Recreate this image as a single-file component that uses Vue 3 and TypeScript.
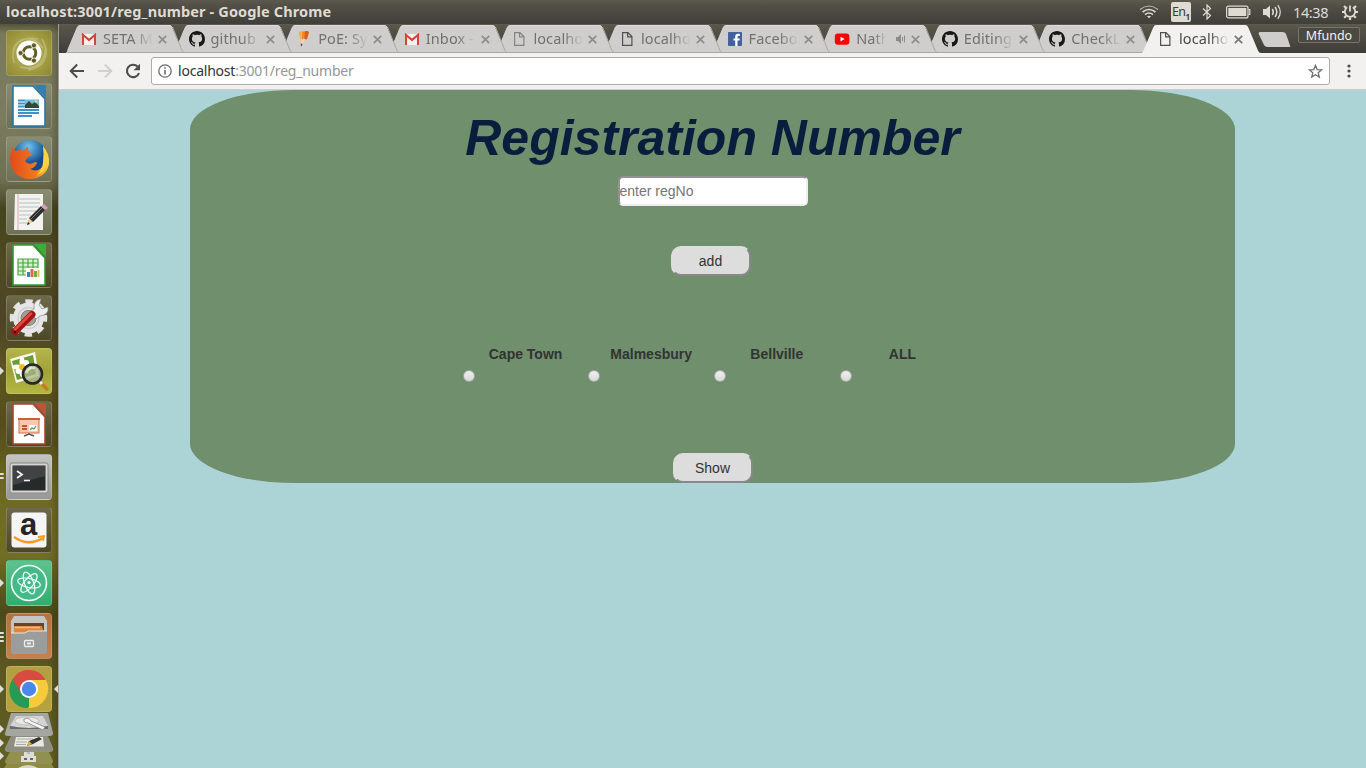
<script setup lang="ts">
import { ref } from 'vue'

interface Tab {
  icon: 'gmail' | 'github' | 'pencil' | 'page' | 'facebook' | 'youtube'
  text: string
  audio?: boolean
  dim?: boolean
}

const tabs: Tab[] = [
  { icon: 'gmail', text: 'SETA M' },
  { icon: 'github', text: 'github' },
  { icon: 'pencil', text: 'PoE: Sy' },
  { icon: 'gmail', text: 'Inbox -' },
  { icon: 'page', text: 'localho', dim: true },
  { icon: 'page', text: 'localho' },
  { icon: 'facebook', text: 'Facebo' },
  { icon: 'youtube', text: 'Nath', audio: true },
  { icon: 'github', text: 'Editing' },
  { icon: 'github', text: 'CheckL' },
  { icon: 'page', text: 'localho' },
]
const active = tabs.length - 1

interface Launcher {
  name: string
  tone: string
  marks?: number
}
const launchers: Launcher[] = [
  { name: 'dash', tone: 'olive' },
  { name: 'writer', tone: 'glass' },
  { name: 'firefox', tone: 'glass' },
  { name: 'gedit', tone: 'glass' },
  { name: 'calc', tone: 'dark' },
  { name: 'settings', tone: 'dark' },
  { name: 'viewer', tone: 'lime', marks: 1 },
  { name: 'impress', tone: 'dark' },
  { name: 'terminal', tone: 'silver', marks: 2 },
  { name: 'amazon', tone: 'dark' },
  { name: 'atom', tone: 'green', marks: 1 },
  { name: 'files', tone: 'orange', marks: 3 },
  { name: 'chrome', tone: 'gold', marks: 1 },
]

const towns = ['Cape Town', 'Malmesbury', 'Bellville', 'ALL']
const regNo = ref('')
</script>

<template>
  <div class="desktop">
    <header class="panel">
      <span class="window-title">localhost:3001/reg_number - Google Chrome</span>
      <div class="indicators">
        <svg class="wifi" width="20" height="16" viewBox="0 0 20 16" fill="none" stroke="#dfdbd2">
          <path d="M1 5.500Q10-1.500 19 5.500" stroke-width="1.200" opacity=".75" />
          <path d="M3.600 8Q10 3 16.400 8" stroke-width="1.700" />
          <path d="M6 10.600Q10 7.400 14 10.600" stroke-width="1.600" />
          <path d="M8 12.300Q10 11 12 12.300L10 14.300z" fill="#dfdbd2" stroke="none" />
        </svg>
        <span class="lang">En<sub>1</sub></span>
        <svg class="bt" width="10" height="16" viewBox="0 0 10 16" fill="none" stroke="#dfdbd2" stroke-width="1.200">
          <path d="M1 4.500L8.500 11.500L5 15V1L8.500 4.500L1 11.500" />
        </svg>
        <svg class="bat" width="25" height="14" viewBox="0 0 25 14">
          <rect x=".6" y="1.100" width="21.400" height="11.800" rx="2" fill="none" stroke="#dfdbd2" stroke-width="1.200" />
          <rect x="2.300" y="3" width="18" height="8" fill="#dfdbd2" />
          <path d="M22.500 4.500h1.300v5h-1.300" fill="none" stroke="#dfdbd2" stroke-width="1.200" />
        </svg>
        <svg class="vol" width="21" height="16" viewBox="0 0 21 16" fill="none" stroke="#dfdbd2" stroke-width="1.500">
          <path d="M1 5h3l4-3.500v13L4 11H1z" fill="#dfdbd2" stroke="none" />
          <path d="M10.300 5q2 3 0 6" />
          <path d="M13 3q3.600 5 0 10" />
          <path d="M15.800 1.200q5 6.800 0 13.600" stroke-width="1.200" />
        </svg>
        <span class="clock">14:38</span>
        <svg class="gear" width="18" height="18" viewBox="0 0 18 18" fill="none" stroke="#dfdbd2">
          <path d="M6.200 4.300a5.200 5.200 0 1 0 5.600 0" stroke-width="1.800" />
          <path d="M9 2.500v6" stroke-width="1.800" />
          <path d="M4.800 4.800L3 3M13.200 4.800L15 3M3.700 9H1M14.300 9H17M5 13L3.200 14.800M13 13l1.800 1.800M9 14.500V17" stroke-width="2.200" />
        </svg>
      </div>
    </header>

    <div class="workspace">
      <nav class="launcher">
        <div v-for="l in launchers" :key="l.name" class="slot">
          <span v-if="l.marks" class="marks" :class="{ bars: l.marks > 1 }">
            <i v-for="n in l.marks" :key="n"></i>
          </span>
          <div class="tile" :class="l.tone">
            <svg v-if="l.name === 'dash'" viewBox="0 0 46 46">
              <g fill="none" stroke="#e5e3b0" opacity=".35">
                <path d="M8 33C3 14 16 6 32 9M36 9c10 17 1 29-14 31M7 20C12 5 29 6 37 18M14 37c18 5 29-9 24-25" stroke-width="1.500" />
              </g>
              <circle cx="23" cy="23" r="12.500" fill="#fff" />
              <circle cx="23.500" cy="23" r="6.300" fill="none" stroke="#625d26" stroke-width="3" />
              <path d="M23.500 23L14.500 23M23.500 23l4.500 8M23.500 23l4.500-8" stroke="#fff" stroke-width="1.200" />
              <g fill="#625d26" stroke="#fff" stroke-width=".8">
                <circle cx="14.600" cy="23" r="2.600" /><circle cx="27.900" cy="15.400" r="2.600" /><circle cx="27.900" cy="30.600" r="2.600" />
              </g>
            </svg>

            <svg v-else-if="l.name === 'writer'" viewBox="0 0 46 46">
              <path d="M7 3h20l12 13v27H7z" fill="#fff" stroke="#2477ad" stroke-width="1.600" />
              <path d="M28 2h12v13z" fill="#2d80b8" />
              <path d="M12 17.500h7M12 20.500h7M12 23.500h7M12 27h21M12 30h21M12 33h14" stroke="#3b92cb" stroke-width="2" />
              <rect x="19" y="16.500" width="14" height="8.500" fill="#72bce6" />
              <path d="M19 25v-3l4-4 3 3 3-2 4 4v2z" fill="#2f4a3b" /><circle cx="30" cy="18.500" r="1.300" fill="#f4dc5c" />
            </svg>

            <svg v-else-if="l.name === 'firefox'" viewBox="0 0 46 46">
              <defs>
                <radialGradient id="ffGlobe" cx=".45" cy=".2"><stop offset="0" stop-color="#6cc5ee" /><stop offset="1" stop-color="#164a8e" /></radialGradient>
                <linearGradient id="ffFur" x1="0" x2="1"><stop offset="0" stop-color="#e04a1b" /><stop offset=".65" stop-color="#f0781e" /><stop offset="1" stop-color="#fbd43c" /></linearGradient>
              </defs>
              <circle cx="24" cy="21.500" r="17.500" fill="url(#ffGlobe)" />
              <path d="M6 11l4 4q4-2 7 0l5-5q0 4 1 6l4 3-5 2-3 4q4 5 10 1 2 0 2 1-2 5-7 6 8 4 13-3 4-7 3-15 3 4 3 9c1 11-8 19-19 19S4 35 4 23q0-6 2-8z" fill="url(#ffFur)" />
              <path d="M37 10q7 8 5 17-3 9-11 12 6-7 6-13 1-8 0-16" fill="#fbd33b" />
            </svg>

            <svg v-else-if="l.name === 'gedit'" viewBox="0 0 46 46">
              <path d="M9 5h28v36H8z" fill="#f2f2ef" /><path d="M12 5v36" stroke="#e7a7a7" />
              <path d="M13 10h21M13 14h21M13 18h20M13 22h17M13 26h12M13 30h8M13 34h8" stroke="#b9bcc1" stroke-width="1.100" />
              <path d="M21 35l2-6 4 4z" fill="#e4c99a" /><path d="M21 36l1-3 2 2z" fill="#222" />
              <path d="M23 29L35 17l4 4-12 12z" fill="#2e2e2e" /><path d="M25 30L36 19" stroke="#777" />
              <path d="M35 17l3-2 4 4-3 2z" fill="#d99ac0" />
            </svg>

            <svg v-else-if="l.name === 'calc'" viewBox="0 0 46 46">
              <path d="M7 3h20l12 13v27H7z" fill="#fff" stroke="#2c9c2f" stroke-width="1.600" />
              <path d="M28 2h12v13z" fill="#3aae3c" />
              <rect x="12" y="17" width="20" height="16" fill="#d9f1d2" />
              <path d="M12 17h20v16H12zM12 21h20M12 25h20M12 29h20M17 17v16M22 17v16M27 17v16" stroke="#46a843" stroke-width="1.200" fill="none" />
              <rect x="20" y="26" width="14" height="9" fill="#fff" />
              <path d="M22.500 35v-5" stroke="#397fc0" stroke-width="3" /><path d="M26 35v-8" stroke="#de6742" stroke-width="3" /><path d="M29.500 35v-6" stroke="#6caf4a" stroke-width="3" /><path d="M32.500 35v-7" stroke="#e4b94e" stroke-width="2" />
            </svg>

            <svg v-else-if="l.name === 'settings'" viewBox="0 0 46 46">
              <circle cx="22.500" cy="23" r="16.300" fill="none" stroke="#e2e2e2" stroke-width="5" stroke-dasharray="7.200 5.602" stroke-dashoffset="3.600" />
              <circle cx="22.500" cy="23" r="11.700" fill="none" stroke="#e6e6e6" stroke-width="7.500" />
              <circle cx="22.500" cy="23" r="10.500" fill="none" stroke="#cfcfcf" stroke-width="1.500" />
              <circle cx="22.500" cy="23" r="7.500" fill="#a09e94" />
              <path d="M24 17l4-3q-1-9 7-10l-2 6 3 4 6-2q1 8-8 9l-4 3z" fill="#eceded" stroke="#8d8d8d" stroke-width=".7" />
              <path d="M9 36.500L26 19.500" stroke="#a31515" stroke-width="7" stroke-linecap="round" /><path d="M9 34.500L25 18.500" stroke="#e34a42" stroke-width="2.500" stroke-linecap="round" />
              <circle cx="9" cy="37" r="1.200" fill="#400" />
            </svg>

            <svg v-else-if="l.name === 'viewer'" viewBox="0 0 46 46">
              <path d="M4 11l25-7 4 24-23 7z" fill="#f6f6f1" /><path d="M6 13l21-6 3 19-19 6z" fill="#6b9b36" />
              <g fill="#fff"><ellipse cx="16" cy="14" rx="2.500" ry="5" /><ellipse cx="16" cy="24" rx="2.500" ry="5" /><ellipse cx="11" cy="19" rx="5" ry="2.500" /><ellipse cx="21" cy="19" rx="5" ry="2.500" /><circle cx="20" cy="15" r="3" /><circle cx="12.500" cy="23" r="3" /></g>
              <circle cx="16" cy="19" r="3" fill="#f2b921" />
              <path d="M34 34l7 7" stroke="#c77a2a" stroke-width="3.500" stroke-linecap="round" /><path d="M33 33l3 3" stroke="#eee" stroke-width="3" />
              <circle cx="26.500" cy="26" r="9.500" fill="#aab58c" fill-opacity=".75" stroke="#25272a" stroke-width="2.600" />
              <path d="M20 25q3-6 9-5" stroke="#f5f5e5" stroke-width="2.500" fill="none" opacity=".7" />
            </svg>

            <svg v-else-if="l.name === 'impress'" viewBox="0 0 46 46">
              <path d="M7 3h20l12 13v27H7z" fill="#fff" stroke="#ad4429" stroke-width="1.600" />
              <path d="M28 2h12v13z" fill="#bd543a" />
              <rect x="13" y="18" width="20" height="14" fill="#f6c8ae" stroke="#d66c45" /><path d="M12 18h22" stroke="#d15d34" stroke-width="2" />
              <path d="M16 25h5M16 28h5" stroke="#c8552f" stroke-width="2" /><rect x="23" y="24" width="8" height="6" fill="#fff" /><path d="M24 29l2-2 2 1 2-3" stroke="#4d9e53" stroke-width="1.300" fill="none" />
              <path d="M23 32v2M18 35l5-2 5 2" stroke="#555" stroke-width="1.500" fill="none" />
            </svg>

            <svg v-else-if="l.name === 'terminal'" viewBox="0 0 46 46">
              <rect x="4" y="9" width="38" height="30" rx="2" fill="#d5d5d2" stroke="#888" />
              <rect x="6.500" y="11.500" width="33" height="25" fill="#272a2b" /><path d="M7 12h32v10L7 31z" fill="#4b4e4f" opacity=".7" />
              <path d="M11 17l5 3.500-5 3.500" stroke="#f2f2f2" stroke-width="1.800" fill="none" /><path d="M18 26.500h6" stroke="#f2f2f2" stroke-width="1.600" />
            </svg>

            <svg v-else-if="l.name === 'amazon'" viewBox="0 0 46 46">
              <rect x="5.500" y="5.500" width="35" height="35" rx="3" fill="#f5f5f5" />
              <text x="22.500" y="27.500" text-anchor="middle" font-family="Liberation Sans, sans-serif" font-weight="700" font-size="31" fill="#252525">a</text>
              <path d="M8 30q14 10 29 1" stroke="#f59a1b" stroke-width="2.300" fill="none" /><path d="M32 30l6-1-1 5" stroke="#f59a1b" stroke-width="1.800" fill="none" />
            </svg>

            <svg v-else-if="l.name === 'atom'" viewBox="0 0 46 46" fill="none" stroke="#effff6">
              <circle cx="23" cy="23" r="17.500" fill="#44b98a" stroke-width="1.600" />
              <g stroke-width="1.200"><ellipse cx="23" cy="23" rx="11.500" ry="4.500" transform="rotate(12 23 23)" /><ellipse cx="23" cy="23" rx="11.500" ry="4.500" transform="rotate(70 23 23)" /><ellipse cx="23" cy="23" rx="11.500" ry="4.500" transform="rotate(130 23 23)" /></g>
              <circle cx="23" cy="22.500" r="1.600" fill="#effff6" stroke="none" />
            </svg>

            <svg v-else-if="l.name === 'files'" viewBox="0 0 46 46">
              <path d="M8 3h30l3 5v12H5V8z" fill="#c3c5c3" /><path d="M8 10h30v9H8z" fill="#65442f" /><path d="M8 13h28l2 7H8z" fill="#dd863e" /><path d="M9 14.500h25" stroke="#f4bb7d" stroke-width="1.500" />
              <path d="M5 20h14l3-2h19v21q0 2-2 2H7q-2 0-2-2z" fill="#9a9d9b" /><path d="M5 20h14l3-2h19" stroke="#e4e4e2" fill="none" />
              <rect x="18.500" y="27.500" width="9" height="6" rx="1" fill="#9a9d9b" stroke="#eee" stroke-width="1.300" /><rect x="21" y="29.500" width="4" height="2" fill="#eee" />
            </svg>

            <svg v-else viewBox="0 0 46 46">
              <path d="M23 23L6.500 13.500A19 19 0 0 1 39.500 13.500z" fill="#d74b40" /><path d="M23 23L39.500 13.500A19 19 0 0 1 23 42z" fill="#f5cb3b" /><path d="M23 23v19A19 19 0 0 1 6.500 13.500z" fill="#269b56" />
              <path d="M23 14h16.800q2 4 2.200 9H31z" fill="#f5cb3b" /><path d="M30.800 27.500L22 42l5-1 12-18z" fill="#f5cb3b" /><path d="M15.200 27.500L6.500 13.500Q12 4 23 4v10z" fill="#d74b40" /><path d="M6.500 13.500L15.200 27.500 23 32l-1 10C6 42-1 26 6.500 13.500" fill="#269b56" />
              <circle cx="23" cy="23" r="9" fill="#fff" /><circle cx="23" cy="23" r="7.200" fill="#4b86ea" />
            </svg>
          </div>
          <span v-if="l.name === 'chrome'" class="focused"></span>
        </div>

        <svg class="stack" width="58" height="56" viewBox="0 0 58 56">
          <path d="M9 48h40l5 8H4z" fill="#8d8a42" />
          <path d="M11 38h37l5 11q0 3-3 3H8q-3 0-3-3z" fill="#929050" />
          <path d="M24 38h10v6h-10zM21 44h15v6H21z" fill="#deded9" /><path d="M24 47h3M30 47h3" stroke="#666" stroke-width="2" /><path d="M27 41h3" stroke="#999" />
          <path d="M18 56q10-6 20 0z" fill="#d5d5c5" />
          <path d="M11 24h37l5 12q1 4-3 4H8q-4 0-3-4z" fill="#919187" fill-opacity=".95" />
          <path d="M16 25h27l1 9.500H14z" fill="#e9e9e4" /><path d="M17 27h16M16 30h11M16 32.500h10" stroke="#a8aaa8" />
          <path d="M27 34l2-5 10-4 3 2-9 5z" fill="#333" /><path d="M27 34l2-5 3 3z" fill="#dfb33e" />
          <path d="M11 1h37l5 20q0 3-3 3H8q-4 0-3-3z" fill="#a9aaa7" fill-opacity=".95" />
          <path d="M16 4h27l5 10q-19 4-38 0z" fill="#d3d4d3" /><path d="M10 14q19 4 38 0v3H10z" fill="#696b6b" />
          <ellipse cx="27" cy="9" rx="12" ry="4" fill="#e8e8e7" stroke="#aaa" stroke-width=".6" /><path d="M24 7q5-2 7 2l14 6-2 3-15-7q-5 0-4-4" fill="#f5f5f5" stroke="#777" stroke-width=".7" />
          <path d="M0 13l4 4-4 4zM0 27l4 4-4 4zM0 40l4 4-4 4z" fill="#dedfd8" />
        </svg>
      </nav>

      <div class="browser">
        <div class="tabstrip">
          <div v-for="(t, i) in tabs" :key="i" class="tab" :class="{ active: i === active }" :style="{ zIndex: i === active ? 20 : 12 - i }">
            <svg class="shape" width="121" height="28" viewBox="0 0 121 28">
              <path d="M0 28L1.500 25.500 11 3Q12 0 14 0H103.500Q105.500 0 106.500 3L116 25.500Q117 28 119 28z" :fill="i === active ? '#f2f1f0' : '#d0cecd'" />
              <path v-if="i !== active" d="M106.500 2L116 25.500 118 27.500H0" fill="none" stroke="#a9a8a6" />
              <path v-if="i !== active" d="M1.500 25.500L11 3Q12 .5 14 .5H103.500Q105.500 .5 106.500 3" fill="none" stroke="#dfdddc" stroke-width=".8" />
            </svg>
            <span class="favicon">
              <svg v-if="t.icon === 'gmail'" width="16" height="16" viewBox="0 0 16 16">
                <path d="M1 3h14v11H1z" fill="#f3efed" /><path d="M2 14V4l6 5 6-5v10" fill="none" stroke="#d7453a" stroke-width="2" /><path d="M1 3l7 6 7-6" fill="none" stroke="#d7453a" stroke-width="1.500" />
              </svg>
              <svg v-else-if="t.icon === 'github'" width="16" height="16" viewBox="0 0 16 16">
                <path fill="#191717" d="M8 0C3.580 0 0 3.580 0 8c0 3.540 2.290 6.530 5.470 7.590.4.070.55-.17.55-.38 0-.19-.01-.82-.01-1.490-2.010.37-2.530-.49-2.690-.94-.09-.23-.48-.94-.82-1.130-.28-.15-.68-.52-.01-.53.63-.01 1.080.58 1.230.82.72 1.210 1.870.87 2.330.66.07-.52.28-.87.51-1.070-1.780-.2-3.640-.89-3.640-3.950 0-.87.31-1.590.82-2.150-.08-.2-.36-1.020.08-2.120 0 0 .67-.21 2.200.82.64-.18 1.320-.27 2-.27s1.360.09 2 .27c1.530-1.040 2.200-.82 2.200-.82.44 1.100.16 1.920.08 2.120.51.56.82 1.270.82 2.150 0 3.070-1.870 3.750-3.650 3.950.29.25.54.73.54 1.480 0 1.070-.01 1.930-.01 2.200 0 .21.15.46.55.38A8.010 8.010 0 0 0 16 8c0-4.420-3.580-8-8-8z" />
              </svg>
              <svg v-else-if="t.icon === 'pencil'" width="16" height="16" viewBox="0 0 16 16">
                <path d="M3 1l8-1 2 1-2 7-6 3z" fill="#ef8a2d" /><path d="M3 1l3-.5L6 9 4.500 8z" fill="#f6b04a" /><path d="M9 0l2 0 2 1-2 7-3 2z" fill="#d9611b" /><path d="M4.300 7.500l2 1 1.500-1L10 8.500l-5 6z" fill="#ecd3b4" /><path d="M4.800 12.500L6.500 13 5 16z" fill="#444" />
              </svg>
              <svg v-else-if="t.icon === 'page'" width="16" height="16" viewBox="0 0 16 16" fill="none" :stroke="t.dim ? '#858381' : '#505050'" stroke-width="1.200">
                <path d="M3.600 1.600h5.400l3.900 4v8.800H3.600zM8.600 1.600v4.300h4.300" />
              </svg>
              <svg v-else-if="t.icon === 'facebook'" width="16" height="16" viewBox="0 0 16 16">
                <rect x="1" y="1" width="14" height="14" rx=".8" fill="#45619d" /><path d="M8.200 15V9.600H6.500V7.400h1.700V5.600q0-2.800 2.900-2.800h1.700V5h-1.200q-1.100 0-1.100 1v1.400h2.300l-.3 2.200h-2V15z" fill="#fff" />
              </svg>
              <svg v-else width="16" height="16" viewBox="0 0 16 16">
                <rect x=".8" y="2.500" width="14.600" height="11.200" rx="3" fill="#f00" /><path d="M6.500 5.800v4.600l4-2.300z" fill="#fff" />
              </svg>
            </span>
            <span class="label" :class="{ short: t.audio }">{{ t.text }}</span>
            <svg v-if="t.audio" class="audio" width="12" height="12" viewBox="0 0 12 12" fill="none" stroke="#8d8b89">
              <path d="M1 4h2l3-3v10L3 8H1z" fill="#8d8b89" stroke="none" /><path d="M7.500 4v4M9.500 2.500v7" />
            </svg>
            <svg class="close" width="9" height="9" viewBox="0 0 9 9" fill="none" :stroke="i === active ? '#777' : '#8f8d8b'" stroke-width="1.700">
              <path d="M.8.8l7.400 7.400M8.200.8L.8 8.200" />
            </svg>
          </div>
          <svg class="newtab" width="33" height="15" viewBox="0 0 33 15">
            <path d="M1.500 0H24.500Q27 0 28 2L32.500 15H9.500Q7 15 6 13L.5 1.500z" fill="#cfcdcb" />
          </svg>
          <span class="profile">Mfundo</span>
        </div>

        <div class="toolbar">
          <svg class="nav" width="16" height="16" viewBox="0 0 16 16" fill="none" stroke="#4c4c4c" stroke-width="2"><path d="M15 8H2M8.200 1.500L1.700 8l6.500 6.500" /></svg>
          <svg class="nav" width="16" height="16" viewBox="0 0 16 16" fill="none" stroke="#d1d0cf" stroke-width="2"><path d="M1 8h13M7.800 1.500L14.300 8l-6.500 6.500" /></svg>
          <svg class="nav" width="16" height="16" viewBox="0 0 16 16" fill="none" stroke="#4c4c4c" stroke-width="2.100"><path d="M14 10A6.200 6.200 0 1 1 12.600 3.600" /><path d="M15 .8v6.400H8.600z" fill="#4c4c4c" stroke="none" /></svg>
          <div class="omnibox">
            <svg width="14" height="14" viewBox="0 0 14 14" fill="none" stroke="#6b6b6b" stroke-width="1.300"><circle cx="7" cy="7" r="6.200" /><path d="M7 6v4.500M7 3.200v1.600" stroke-width="1.600" /></svg>
            <span class="url"><b>localhost</b>:3001/reg_number</span>
            <svg class="star" width="15" height="15" viewBox="0 0 15 15" fill="none" stroke="#6e6e6e" stroke-width="1.300"><path d="M7.500 1.500l1.700 4.100 4.400.3-3.400 2.900 1.100 4.300-3.800-2.400-3.800 2.400 1.100-4.300L1.400 5.900l4.400-.3z" /></svg>
          </div>
          <svg class="more" width="4" height="14" viewBox="0 0 4 14" fill="#4a4a4a"><circle cx="2" cy="2" r="1.600" /><circle cx="2" cy="7" r="1.600" /><circle cx="2" cy="12" r="1.600" /></svg>
        </div>

        <main class="page">
          <form class="card" @submit.prevent>
            <h1>Registration Number</h1>
            <input v-model="regNo" class="reg" type="text" placeholder="enter regNo" />
            <button class="btn add" type="button">add</button>
            <div class="towns">
              <label v-for="town in towns" :key="town">
                {{ town }}
                <span class="radio"></span>
              </label>
            </div>
            <button class="btn show" type="button">Show</button>
          </form>
        </main>
      </div>
    </div>
  </div>
</template>

<style>
html,
body {
  margin: 0;
  overflow: hidden;
}
</style>

<style scoped>
* {
  box-sizing: border-box;
}
.desktop {
  width: 1366px;
  height: 768px;
  display: flex;
  flex-direction: column;
  font-family: 'Noto Sans', 'Open Sans', sans-serif;
  overflow: hidden;
}
.panel {
  height: 24px;
  flex: none;
  display: flex;
  justify-content: space-between;
  align-items: center;
  padding: 0 7px 0 6px;
  background: linear-gradient(#5c5a4e, #504e45 30%, #3f3e39);
  color: #dfdbd2;
}
.window-title {
  font-weight: 700;
  font-size: 14.5px;
  letter-spacing: 0.13px;
  line-height: 22px;
  margin-top: -2px;
  white-space: nowrap;
}
.indicators {
  display: flex;
  align-items: center;
}
.lang {
  width: 20px;
  height: 20px;
  margin: 0 11px 0 12px;
  border-radius: 2px;
  background: #dfdbd2;
  color: #3c3b37;
  font-size: 12.5px;
  line-height: 20px;
  padding-left: 1px;
  letter-spacing: -0.6px;
  white-space: nowrap;
}
.lang sub {
  font-size: 8px;
  line-height: 0;
  font-weight: 700;
}
.bt {
  margin-right: 14px;
}
.bat {
  margin-right: 11px;
}
.vol {
  margin-right: 10px;
}
.clock {
  width: 37px;
  font-size: 14.5px;
  letter-spacing: -0.4px;
  margin-right: 11px;
  line-height: 24px;
}
.workspace {
  display: flex;
  height: 744px;
}

/* launcher */
.launcher {
  width: 59px;
  flex: none;
  padding-top: 6px;
  border-right: 1px solid #9f9ba3;
  background: linear-gradient(#58583d 0, #79795c 10px, #7b7c5f 90px, #6e7053 155px, #45441f 185px, #4e4a20 240px, #4c4526 300px, #5d5621 350px, #554c1a 400px, #6f6a22 470px, #716e24 530px, #4c4a1a 590px, #5a5621 640px, #626022 744px);
  box-shadow: inset -7px 0 8px -5px rgba(40, 35, 20, 0.4);
}
.slot {
  height: 53px;
  display: flex;
  align-items: flex-start;
  position: relative;
}
.slot:nth-child(13) {
  height: 46px;
}
.tile {
  width: 46px;
  height: 46px;
  margin-left: 6px;
  border-radius: 4px;
  border: 1px solid rgba(255, 255, 255, 0.16);
  flex: none;
}
.tile svg {
  display: block;
  width: 46px;
  height: 46px;
  margin: -1px;
  overflow: visible;
}
.olive { background: radial-gradient(circle, #c0bc75, #9e983f 65%, #8e8934); }
.glass { background: linear-gradient(#8a8c72, #6d7055); }
.dark { background: linear-gradient(#6d6949, #4c4725); }
.lime { background: linear-gradient(#b5b54d, #a0a136 50%, #b4b641); }
.silver { background: linear-gradient(#c4c4c3, #979899); }
.green { background: linear-gradient(#5ec28f, #31ad6c); }
.orange { background: linear-gradient(#b4723c, #c38150); }
.gold { background: linear-gradient(#b29f43, #b7a23c); }
.marks {
  position: absolute;
  left: 0;
  top: 19px;
}
.marks i {
  display: block;
  border: 4px solid transparent;
  border-left-color: #dedfd8;
  border-right: 0;
}
.marks.bars {
  display: grid;
  gap: 2px;
}
.marks.bars i {
  width: 4px;
  height: 2px;
  border: 0;
  background: #dedfd8;
  border-radius: 0 1px 1px 0;
}
.focused {
  position: absolute;
  right: 0;
  top: 19px;
  border: 4px solid transparent;
  border-right-color: #dedfd8;
  border-left: 0;
}
.stack {
  display: block;
}

/* browser chrome */
.browser {
  flex: 1;
  min-width: 0;
  display: flex;
  flex-direction: column;
}
.tabstrip {
  height: 29px;
  flex: none;
  display: flex;
  padding: 1px 0 0 7px;
  background: linear-gradient(#5a574b, #3e3d38);
  box-shadow: inset 0 1px #5d5b4e;
}
.tab {
  width: 107.6px;
  flex: none;
  height: 28px;
  position: relative;
  display: flex;
  align-items: center;
  padding-left: 15px;
  color: #73716f;
}
.tab.active {
  color: #4a4a4a;
}
.shape {
  position: absolute;
  left: 0;
  top: 0;
}
.favicon,
.label,
.audio,
.close {
  position: relative;
  flex: none;
}
.favicon {
  width: 16px;
  height: 16px;
}
.favicon svg {
  display: block;
}
.label {
  width: 51px;
  margin: -2px 0 0 6px;
  font-size: 14.5px;
  letter-spacing: 0.1px;
  line-height: 26px;
  white-space: nowrap;
  mask-image: linear-gradient(to right, #000 60%, transparent 98%);
}
.label.short {
  width: 31px;
  margin-right: 8px;
}
.close {
  margin-left: 4px;
}
.label.short ~ .close {
  margin-left: 4px;
}
.newtab {
  margin: 7px 0 0 8px;
}
.profile {
  margin: 2px 6px 0 auto;
  width: 62px;
  height: 16px;
  border: 1px solid #77756b;
  background: #4a4942;
  color: #f2f1ed;
  border-radius: 2px;
  font-size: 12.5px;
  line-height: 15px;
  text-align: center;
}
.toolbar {
  height: 37px;
  flex: none;
  display: flex;
  align-items: center;
  padding: 0 15px 0 10px;
  background: #f2f1f0;
  border-bottom: 1px solid #cfcecd;
}
.nav {
  margin-right: 12px;
}
.nav:nth-child(3) {
  margin-right: 10px;
}
.omnibox {
  flex: 1;
  height: 28px;
  display: flex;
  align-items: center;
  padding: 0 6px;
  background: #fff;
  border: 1px solid #acabaa;
  border-radius: 3px;
}
.url {
  margin: -2px 0 0 6px;
  font-size: 14px;
  color: #969696;
  letter-spacing: -0.22px;
  white-space: nowrap;
}
.url b {
  font-weight: 400;
  color: #333;
}
.star {
  margin-left: auto;
}
.more {
  margin-left: 17px;
}

/* page content */
.page {
  flex: 1;
  background: #acd4d6;
}
.card {
  width: 1045px;
  height: 393px;
  margin-left: 131px;
  display: flex;
  flex-direction: column;
  align-items: center;
  background: #6f8f6d;
  border-radius: 10%;
  font-family: 'Liberation Sans', Arial, sans-serif;
  font-size: 14px;
  color: #333;
}
h1 {
  margin: 21px 0 10px;
  font-size: 50px;
  line-height: 55px;
  font-style: italic;
  font-weight: 700;
  color: #0b1d3c;
  white-space: nowrap;
}
.reg {
  width: 190px;
  height: 30px;
  padding: 0;
  border: 2px solid;
  border-color: #949194 #eee #eee #949194;
  border-radius: 5px;
  background: #fff;
  font: inherit;
  outline: 0;
}
.reg::placeholder {
  color: #757575;
}
.btn {
  width: 80px;
  height: 30px;
  padding: 0;
  border: 2px solid;
  border-color: #ddd #8b888b #8b888b #ddd;
  border-radius: 10px;
  background: #ddd;
  color: #333;
  font: inherit;
}
.add {
  margin: 40px 4px 0 0;
}
.towns {
  width: 502.5px;
  margin: 68px 0 0 3px;
  display: grid;
  grid-template-columns: repeat(4, 1fr);
}
.towns label {
  display: flex;
  flex-direction: column;
  align-items: center;
  font-weight: 700;
  line-height: 20px;
}
.radio {
  align-self: flex-start;
  width: 12px;
  height: 12px;
  margin: 6px 0 0;
  border-radius: 50%;
  border: 1px solid #a4a5a2;
  background: linear-gradient(#eee, #dadada);
}
.show {
  margin-top: 71px;
}
</style>
